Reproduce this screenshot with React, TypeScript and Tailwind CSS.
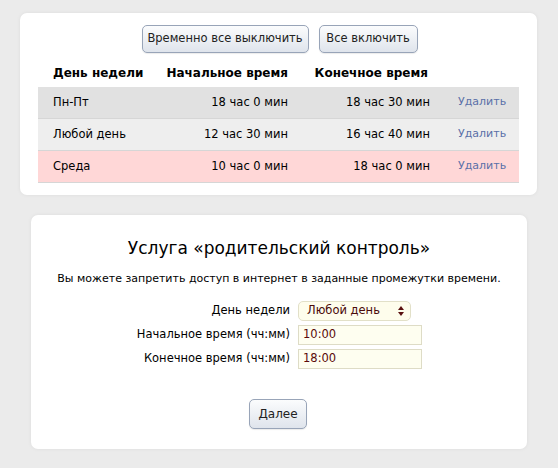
import React from "react";

const rows = [
  { day: "Пн-Пт", start: "18 час 0 мин", end: "18 час 30 мин", bg: "bg-[#e1e1e1]" },
  { day: "Любой день", start: "12 час 30 мин", end: "16 час 40 мин", bg: "bg-[#eeeeee]" },
  { day: "Среда", start: "10 час 0 мин", end: "18 час 0 мин", bg: "bg-[#ffd7d7]" },
];

const btn =
  "rounded-[5px] border border-[#98a4b8] bg-gradient-to-b from-[#fbfcfd] to-[#dfe4ec] text-[#222] shadow-[0_1px_1px_rgba(0,0,0,0.08)]";

export default function App() {
  return (
    <div
      className="min-h-[468px] w-[558px] bg-[#ebebeb] pt-[13px] text-[11.5px] text-black"
      style={{ fontFamily: '"DejaVu Sans", Verdana, sans-serif' }}
    >
      {/* Schedule list */}
      <div className="ml-[20px] w-[517px] rounded-[7px] bg-white pt-[12px] pb-[12px] shadow-[0_0_4px_rgba(0,0,0,0.06)]">
        <div className="flex justify-center gap-[10px] pl-[2px]">
          <button className={`${btn} h-[28px] w-[167px] text-[11.5px]`}>Временно все выключить</button>
          <button className={`${btn} h-[28px] w-[99px] text-[11.5px]`}>Все включить</button>
        </div>

        <div className="mx-[18px] mt-[5px]">
          <div className="flex h-[29px] items-center whitespace-nowrap pl-[15px] text-[12px] font-bold">
            <div className="w-[105px]">День недели</div>
            <div className="w-[130px] text-right">Начальное время</div>
            <div className="w-[140px] text-right">Конечное время</div>
          </div>
          {rows.map((r) => (
            <div
              key={r.day}
              className={`flex h-[32px] items-center whitespace-nowrap border-b border-[#d6d6d6] pl-[15px] ${r.bg}`}
            >
              <div className="w-[105px]">{r.day}</div>
              <div className="w-[130px] text-right">{r.start}</div>
              <div className="w-[142px] text-right">{r.end}</div>
              <div className="pl-[28px] text-[11px] text-[#5a70a8]">Удалить</div>
            </div>
          ))}
        </div>
      </div>

      {/* Parental control form */}
      <div className="ml-[31px] mt-[20px] w-[496px] rounded-[7px] bg-white pt-[20px] pb-[20px] shadow-[0_0_4px_rgba(0,0,0,0.06)]">
        <h1 className="text-center text-[17px] leading-[26px]">
          Услуга «родительский контроль»
        </h1>
        <p className="mt-[10px] text-center text-[11px] leading-[16px]">
          Вы можете запретить доступ в интернет в заданные промежутки времени.
        </p>

        <div className="mt-[14px] flex flex-col gap-[4px] text-[11.5px]">
          <div className="flex items-center">
            <div className="w-[259px] text-right">День недели</div>
            <div className="ml-[8px] flex h-[20px] w-[113px] items-center justify-between rounded-[5px] border border-[#e2e0c8] bg-[#fefdec] pl-[8px] pr-[6px] text-[#4a0a0a]">
              <span>Любой день</span>
              <svg width="6" height="10" viewBox="0 0 6 10">
                <path d="M3 0 L6 4 H0 Z M0 6 H6 L3 10 Z" fill="#5a1010" />
              </svg>
            </div>
          </div>
          <div className="flex items-center">
            <div className="w-[259px] text-right">Начальное время (чч:мм)</div>
            <div className="ml-[8px] flex h-[20px] w-[124px] items-center border border-[#dedcc6] bg-[#fefef0] pl-[4px] text-[#5a0a0a]">
              10:00
            </div>
          </div>
          <div className="flex items-center">
            <div className="w-[259px] text-right">Конечное время (чч:мм)</div>
            <div className="ml-[8px] flex h-[20px] w-[124px] items-center border border-[#dedcc6] bg-[#fefef0] pl-[4px] text-[#5a0a0a]">
              18:00
            </div>
          </div>
        </div>

        <div className="mt-[30px] flex justify-center pr-[2px]">
          <button className={`${btn} h-[30px] w-[58px] text-[12px]`}>Далее</button>
        </div>
      </div>
    </div>
  );
}
